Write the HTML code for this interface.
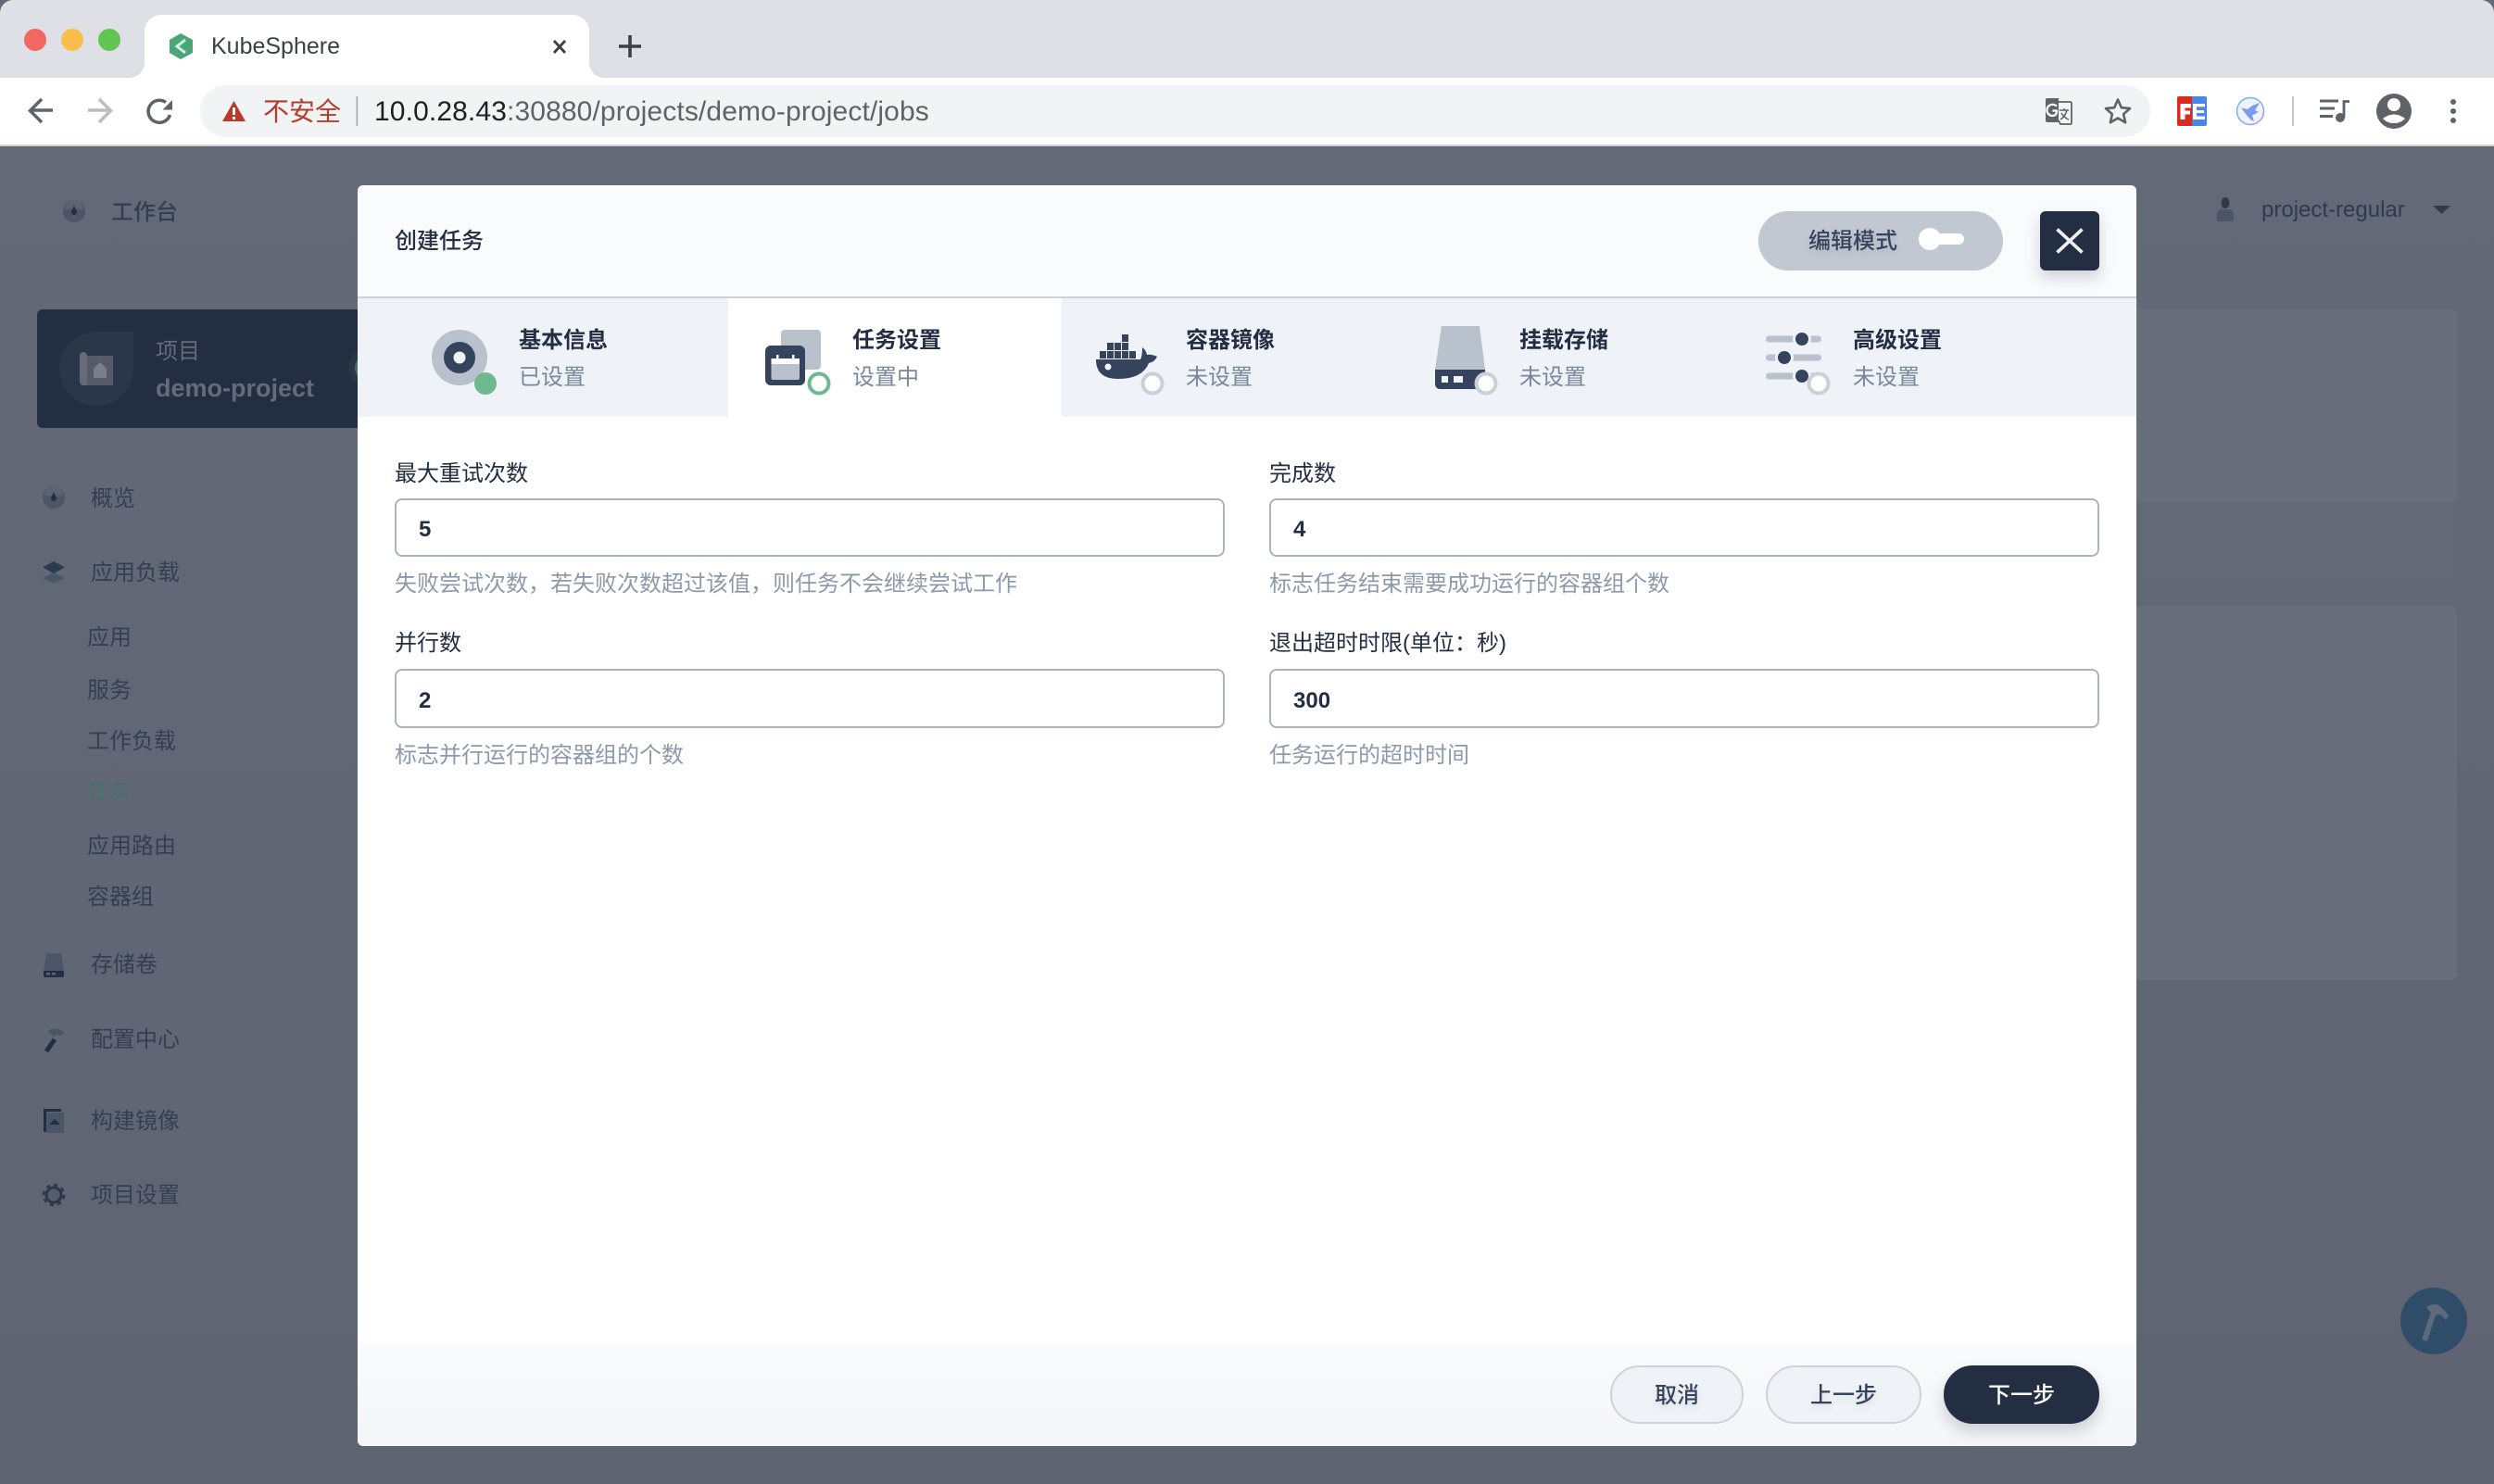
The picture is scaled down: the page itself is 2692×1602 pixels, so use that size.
<!DOCTYPE html>
<html lang="zh"><head><meta charset="utf-8"><title>KubeSphere</title>
<style>
*{box-sizing:border-box}
html,body{margin:0;padding:0;width:2692px;height:1602px;overflow:hidden;background:#636977}
body{position:relative;font-family:"Liberation Sans","Noto Sans CJK SC",sans-serif;font-size:24px;color:#242e42}
.a{position:absolute}
.t{position:absolute;height:40px;line-height:40px;white-space:nowrap;font-size:24px}
.nav{color:#343e52}
.sub{color:#79879c}
.b{font-weight:700}
.m{font-weight:500}
.inp{position:absolute;width:896px;height:63px;background:#fff;border:2px solid #abb3bf;border-radius:8px}
.help{color:#8d99ab}
.lab{color:#242e42;font-weight:400}
.val{font-weight:700;color:#242e42}
.btn{position:absolute;top:1474px;height:63px;border-radius:32px;text-align:center;line-height:61px;font-size:24px;border:2px solid #ccd3db;background:#eff2f7;color:#36435c;font-weight:500;text-shadow:0 4px 8px rgba(36,46,66,.1)}
svg{position:absolute;left:0;top:0}
</style></head><body>
<!-- browser chrome -->
<div class="a" style="left:0;top:0;width:2692px;height:84px;background:#dfe0e5;border-radius:14px 14px 0 0"></div>
<div class="a" style="left:156px;top:16px;width:480px;height:68px;background:#fff;border-radius:18px 18px 0 0"></div>
<div class="a" style="left:0;top:84px;width:2692px;height:72px;background:#fff"></div>
<div class="a" style="left:0;top:156px;width:2692px;height:2px;background:#cfd0d4"></div>
<div class="a" style="left:216px;top:92px;width:2105px;height:56px;background:#f1f3f4;border-radius:28px"></div>
<!-- tab flares -->
<div class="a" style="left:140px;top:68px;width:16px;height:16px;background:#fff"></div>
<div class="a" style="left:140px;top:68px;width:16px;height:16px;background:#dfe0e5;border-radius:0 0 16px 0"></div>
<div class="a" style="left:636px;top:68px;width:16px;height:16px;background:#fff"></div>
<div class="a" style="left:636px;top:68px;width:16px;height:16px;background:#dfe0e5;border-radius:0 0 0 16px"></div>
<!-- page underlay -->
<div class="a" style="left:0;top:158px;width:2692px;height:1444px;background:linear-gradient(#636977,#5f6472)"></div>
<div class="a" style="left:386px;top:334px;width:2266px;height:295px;border-radius:8px;background:linear-gradient(#686e7a 0,#686e7a 208px,#636977 208px)"></div>
<div class="a" style="left:386px;top:654px;width:2266px;height:404px;border-radius:8px;background:#686e7a"></div>
<div class="a" style="left:40px;top:334px;width:360px;height:128px;background:#242e42;border-radius:6px"></div>
<div class="a" style="left:376px;top:376px;width:42px;height:42px;border-radius:21px;background:#2c3649"></div>
<div class="a" style="left:383px;top:383px;width:28px;height:28px;border-radius:14px;background:#4a6a68"></div>
<!-- modal -->
<div class="a" style="left:386px;top:200px;width:1920px;height:1361px;background:#fff;border-radius:6px;overflow:hidden">
  <div class="a" style="left:0;top:0;width:1920px;height:120px;background:#fafbfd"></div>
  <div class="a" style="left:0;top:120px;width:1920px;height:2px;background:#ccd3db"></div>
  <div class="a" style="left:0;top:122px;width:1920px;height:128px;background:#eff2f7"></div>
  <div class="a" style="left:400px;top:122px;width:360px;height:128px;background:#fff"></div>
  <div class="a" style="left:0;top:1250px;width:1920px;height:111px;background:linear-gradient(#fafbfd,#f4f5f7)"></div>
</div>
<div class="a" style="left:1898px;top:228px;width:264px;height:64px;border-radius:32px;background:#c1c8d1"></div>
<div class="a" style="left:2202px;top:228px;width:64px;height:64px;border-radius:6px;background:#242e42;box-shadow:0 8px 16px rgba(36,46,66,.2)"></div>
<div class="inp" style="left:426px;top:538px"></div>
<div class="inp" style="left:1370px;top:538px"></div>
<div class="inp" style="left:426px;top:722px;height:64px"></div>
<div class="inp" style="left:1370px;top:722px;height:64px"></div>
<div class="btn" style="left:1738px;width:144px">取消</div>
<div class="btn" style="left:1906px;width:168px">上一步</div>
<div class="btn" style="left:2098px;width:168px;background:#242e42;border-color:#242e42;color:#fff;box-shadow:0 8px 16px rgba(36,46,66,.2);text-shadow:none">下一步</div>

<svg width="2692" height="1602" viewBox="0 0 2692 1602" fill="none">
<!-- traffic lights -->
<circle cx="38" cy="43" r="12" fill="#f2675f"/><circle cx="78" cy="43" r="12" fill="#f8bd4a"/><circle cx="118" cy="43" r="12" fill="#61c554"/>
<!-- favicon -->
<path d="M195 36L208 43V57L195 64L183 57V43Z" fill="#4aa678"/>
<path d="M200 43L191 50L200 57" stroke="#d5efe0" stroke-width="3"/>
<!-- tab close & plus -->
<path d="M598 44L610 57M610 44L598 57" stroke="#3c4043" stroke-width="2.800"/>
<path d="M680 38V62M668 50H692" stroke="#3c4043" stroke-width="3.600"/>
<!-- nav -->
<path d="M57 119H33M45 107L32.5 119.5L45 132" stroke="#5f6368" stroke-width="3.5"/>
<path d="M95 119H119M107 107L119.5 119.5L107 132" stroke="#bdbdbd" stroke-width="3.5"/>
<path d="M183.500 124A12 12 0 1 1 179 110.500" stroke="#5f6368" stroke-width="3.500"/>
<path d="M186 108V118.500H175.500Z" fill="#5f6368"/>
<path d="M252.500 109L265 131H240Z" fill="#b83a2b"/>
<rect x="251" y="116" width="3" height="8" fill="#fff"/><rect x="251" y="126" width="3" height="3" fill="#fff"/>
<rect x="384.500" y="104" width="1.600" height="32" fill="#a9a9a9"/>
<!-- translate -->
<path d="M2210 106H2222V132H2210Q2208 132 2208 130V108Q2208 106 2210 106Z" fill="#5f6368"/>
<path d="M2222 110H2234.500Q2236 110 2236 112V132Q2236 134 2234.500 134H2224L2222 130" stroke="#5f6368" stroke-width="1.800"/>
<path d="M2223 119H2233M2228 117V119M2231 119Q2229 126 2224 129M2225 122Q2228 127 2233 129" stroke="#5f6368" stroke-width="1.500"/>
<path d="M2220 114.500Q2218 112.800 2215.500 112.800A6 6 0 1 0 2215.500 125Q2220 125 2220 119.500H2215.500" stroke="#fff" stroke-width="2.200"/>
<!-- star -->
<path d="M2286 107.500L2289.800 116.200L2299 117.100L2292.100 123.200L2294.100 132.200L2286 127.500L2277.900 132.200L2279.900 123.200L2273 117.100L2282.200 116.200Z" stroke="#5f6368" stroke-width="2.600" stroke-linejoin="round"/>
<!-- FE -->
<path d="M2352 104H2366L2366 136H2352Q2350 136 2350 134V106Q2350 104 2352 104Z" fill="#d92c1f"/>
<path d="M2366 104H2380Q2382 104 2382 106V134Q2382 136 2380 136H2366Z" fill="#4a86e8"/>
<path d="M2353.500 112H2365V116.500H2358.500V119.500H2364V123.500H2358.500V129H2353.500Z" fill="#fff"/>
<path d="M2367 112H2380V115.300H2371V119H2379V122H2371V125.500H2380V129H2367Z" fill="#fff"/>
<!-- bird -->
<defs><linearGradient id="bg" x1="0" y1="0" x2="1" y2="1"><stop offset="0" stop-color="#55c2f2"/><stop offset="1" stop-color="#b58ff0"/></linearGradient></defs>
<circle cx="2429" cy="120" r="14.500" fill="#eef3fd" stroke="url(#bg)" stroke-width="1.500"/>
<path d="M2439 111L2431 114L2426 118L2419 116.500L2424 123L2429 129L2433 131L2431 124.500L2438 121L2434 119Z" fill="#7b9cef"/>
<rect x="2474" y="104" width="2" height="32" fill="#c8c8c8"/>
<!-- playlist -->
<path d="M2504 109H2524M2504 117H2520M2504 125.500H2518" stroke="#5f6368" stroke-width="3"/>
<circle cx="2526" cy="127" r="5" fill="#5f6368"/>
<path d="M2530 127V109.500H2536" stroke="#5f6368" stroke-width="2.800"/>
<!-- avatar -->
<circle cx="2584" cy="120" r="19" fill="#5f6368"/>
<circle cx="2584" cy="113" r="7" fill="#fff"/>
<path d="M2572 128Q2578 123.500 2584 123.500Q2590 123.500 2596 128Q2591.500 133 2584 133Q2576.500 133 2572 128Z" fill="#fff"/>
<circle cx="2648" cy="110" r="3" fill="#5f6368"/><circle cx="2648" cy="120" r="3" fill="#5f6368"/><circle cx="2648" cy="130" r="3" fill="#5f6368"/>

<!-- user -->
<ellipse cx="2402" cy="219" rx="4.500" ry="6" fill="#2f3a4f"/>
<path d="M2393 239V231Q2393 227 2398 226H2406Q2411 227 2411 231V239Z" fill="#4b5568"/>
<path d="M2626 222H2645L2635.500 231Z" fill="#2f3a4f"/>

<!-- sidebar icons -->
<circle cx="80" cy="228" r="12" fill="#4d5669"/><path d="M70 226A10 10 0 0 1 90 226Z" fill="#5c6373"/><path d="M80 222Q83 228 83 229A3 3 0 0 1 77 229Q77 228 80 222Z" fill="#242e42"/>
<path d="M144 358V398A40 40 0 1 1 104 358Z" fill="#2c3649"/>
<path d="M86 384A4 4 0 0 1 94 384V416H90A4 4 0 0 1 86 412Z" fill="#666b79"/>
<rect x="94" y="384" width="28" height="32" fill="#565b69"/>
<path d="M108 391L115 398V408H101V398Z" fill="#7b7f8a"/>
<circle cx="58" cy="537" r="12" fill="#4d5669"/><path d="M48 535A10 10 0 0 1 68 535Z" fill="#5c6373"/><path d="M58 531Q61 537 61 538A3 3 0 0 1 55 538Q55 537 58 531Z" fill="#242e42"/>
<path d="M46 624L58 618L70 624L58 630Z" fill="#4b5568"/>
<path d="M46 612.500L58 606L70 612.500L58 619Z" fill="#2c3a50"/>
<path d="M50 1029H66L69 1048H47Z" fill="#4b5568"/>
<path d="M47 1048H69V1053Q69 1055 67 1055H49Q47 1055 47 1053Z" fill="#242e42"/>
<rect x="50" y="1050" width="4" height="2.500" fill="#5c6373"/><rect x="56" y="1050" width="4" height="2.500" fill="#5c6373"/>
<path d="M50 1135L59 1122" stroke="#242e42" stroke-width="5"/>
<path d="M52 1113Q60 1107 70 1115L66 1118Q60 1115 58 1119L54 1116Z" fill="#4b5568"/>
<path d="M48.500 1222V1198.500H66" stroke="#242e42" stroke-width="3"/>
<rect x="50" y="1201" width="19" height="22" rx="1" fill="#4b5568"/>
<path d="M59 1208L65 1214H53Z" fill="#242e42"/>
<circle cx="58" cy="1290" r="8" stroke="#2c3649" stroke-width="3" fill="#565e6e"/>
<circle cx="58" cy="1290" r="11" stroke="#2c3649" stroke-width="2.500" stroke-dasharray="4.300 4.300"/>

<!-- FAB -->
<circle cx="2627" cy="1426" r="36" fill="#2f4c69"/>
<path d="M2617 1447L2627 1416" stroke="#5c6a7c" stroke-width="6"/>
<path d="M2619 1411Q2628 1405 2635 1411L2643 1420L2640 1425L2634 1419L2626 1420Z" fill="#5c6a7c"/>

<!-- toggle -->
<rect x="2083" y="252" width="37" height="12" rx="6" fill="#fff"/>
<circle cx="2083" cy="258" r="12" fill="#fff"/>
<!-- close -->
<path d="M2220.500 247.500L2247.500 272.500M2247.500 247.500L2220.500 272.500" stroke="#f0f0f0" stroke-width="3.600"/>

<!-- step 1 -->
<circle cx="496" cy="386" r="30" fill="#b9c2cc"/>
<circle cx="496" cy="386" r="17" fill="#36435c"/>
<circle cx="496" cy="386" r="6.500" fill="#eff2f8"/>
<circle cx="524" cy="414" r="12" fill="#6fb98f"/>
<!-- step 2 -->
<rect x="843" y="356" width="43" height="43" rx="4" fill="#b9c2cc"/>
<rect x="826" y="373" width="43" height="43" rx="6" fill="#36435c"/>
<path d="M832.500 387H863V393H832.500Z" fill="#fff"/>
<rect x="838" y="383" width="2.500" height="5" fill="#fff"/><rect x="855" y="383" width="2.500" height="5" fill="#fff"/>
<path d="M832.500 393H863V408Q863 410 861 410H834.500Q832.500 410 832.500 408Z" fill="#b9c2cc"/>
<circle cx="884" cy="414" r="10.500" fill="#fff" stroke="#6fb98f" stroke-width="4"/>
<!-- step 3 docker -->
<g fill="#36435c">
<rect x="1211" y="361" width="7" height="8"/>
<rect x="1195" y="370" width="7" height="8"/><rect x="1203" y="370" width="7" height="8"/><rect x="1211" y="370" width="7" height="8"/>
<rect x="1187" y="379" width="7" height="8"/><rect x="1195" y="379" width="7" height="8"/><rect x="1203" y="379" width="7" height="8"/><rect x="1211" y="379" width="7" height="8"/><rect x="1219" y="379" width="7" height="8"/>
<path d="M1183 388H1231Q1233 384 1233 375Q1237 378 1238 383Q1243 382 1249 385Q1246 391 1240 392Q1233 409 1207 409Q1183 409 1183 388Z"/>
</g>
<circle cx="1196" cy="396" r="3.500" fill="#eff2f8"/>
<circle cx="1244" cy="414" r="10.500" fill="#fff" stroke="#c9d0d9" stroke-width="4"/>
<!-- step 4 storage -->
<path d="M1556 352H1597L1603 399H1549Z" fill="#b9c2cc"/>
<path d="M1549 399H1603V420H1555Q1549 420 1549 414Z" fill="#36435c"/>
<rect x="1556" y="406" width="7" height="7" fill="#eff2f8"/><rect x="1569" y="406" width="10" height="7" fill="#eff2f8"/>
<circle cx="1604" cy="414" r="10.500" fill="#fff" stroke="#c9d0d9" stroke-width="4"/>
<!-- step 5 sliders -->
<g>
<rect x="1906" y="362.500" width="60" height="7" rx="3.500" fill="#b9c2cc"/>
<rect x="1906" y="382.500" width="60" height="7" rx="3.500" fill="#b9c2cc"/>
<rect x="1906" y="402.500" width="60" height="7" rx="3.500" fill="#b9c2cc"/>
<circle cx="1945" cy="366" r="10" fill="#eff2f8"/><circle cx="1945" cy="366" r="7" fill="#36435c"/>
<circle cx="1926" cy="386" r="10" fill="#eff2f8"/><circle cx="1926" cy="386" r="7" fill="#36435c"/>
<circle cx="1945" cy="406" r="10" fill="#eff2f8"/><circle cx="1945" cy="406" r="7" fill="#36435c"/>
</g>
<circle cx="1963" cy="414" r="10.500" fill="#fff" stroke="#c9d0d9" stroke-width="4"/>
</svg>

<!-- browser text -->
<div class="t" style="left:228px;top:30px;font-size:25px;color:#3c4043">KubeSphere</div>
<div class="t" style="left:284px;top:101px;font-size:28px;color:#b83a2b">不安全</div>
<div class="t" style="left:404px;top:101px;font-size:30px;letter-spacing:.12px;color:#5f6368"><span style="color:#202124">10.0.28.43</span>:30880/projects/demo-project/jobs</div>
<div class="t" style="left:2441px;top:207px;color:#2f3a4f">project-regular</div>

<!-- sidebar text -->
<div class="t m nav" style="left:120px;top:210px">工作台</div>
<div class="t" style="left:168px;top:360px;color:#666b79">项目</div>
<div class="t b" style="left:168px;top:399px;font-size:27px;color:#666b79">demo-project</div>
<div class="t nav" style="left:98px;top:519px">概览</div>
<div class="t nav" style="left:98px;top:599px">应用负载</div>
<div class="t nav" style="left:94px;top:669px">应用</div>
<div class="t nav" style="left:94px;top:726px">服务</div>
<div class="t nav" style="left:94px;top:781px">工作负载</div>
<div class="t" style="left:94px;top:836px;color:#45706a">任务</div>
<div class="t nav" style="left:94px;top:894px">应用路由</div>
<div class="t nav" style="left:94px;top:949px">容器组</div>
<div class="t nav" style="left:98px;top:1022px">存储卷</div>
<div class="t nav" style="left:98px;top:1103px">配置中心</div>
<div class="t nav" style="left:98px;top:1191px">构建镜像</div>
<div class="t nav" style="left:98px;top:1271px">项目设置</div>

<!-- modal text -->
<div class="t m" style="left:426px;top:241px">创建任务</div>
<div class="t m" style="left:1952px;top:241px;color:#36435c;text-shadow:0 4px 8px rgba(36,46,66,.1)">编辑模式</div>

<div class="t b" style="left:560px;top:348px">基本信息</div><div class="t sub" style="left:560px;top:388px">已设置</div>
<div class="t b" style="left:920px;top:348px">任务设置</div><div class="t sub" style="left:920px;top:388px">设置中</div>
<div class="t b" style="left:1280px;top:348px">容器镜像</div><div class="t sub" style="left:1280px;top:388px">未设置</div>
<div class="t b" style="left:1640px;top:348px">挂载存储</div><div class="t sub" style="left:1640px;top:388px">未设置</div>
<div class="t b" style="left:2000px;top:348px">高级设置</div><div class="t sub" style="left:2000px;top:388px">未设置</div>

<div class="t lab" style="left:426px;top:492px">最大重试次数</div>
<div class="t val" style="left:452px;top:552px">5</div>
<div class="t help" style="left:426px;top:611px">失败尝试次数，若失败次数超过该值，则任务不会继续尝试工作</div>
<div class="t lab" style="left:1370px;top:492px">完成数</div>
<div class="t val" style="left:1396px;top:552px">4</div>
<div class="t help" style="left:1370px;top:611px">标志任务结束需要成功运行的容器组个数</div>
<div class="t lab" style="left:426px;top:675px">并行数</div>
<div class="t val" style="left:452px;top:737px">2</div>
<div class="t help" style="left:426px;top:796px">标志并行运行的容器组的个数</div>
<div class="t lab" style="left:1370px;top:675px">退出超时时限(单位：秒)</div>
<div class="t val" style="left:1396px;top:737px">300</div>
<div class="t help" style="left:1370px;top:796px">任务运行的超时时间</div>
</body></html>
